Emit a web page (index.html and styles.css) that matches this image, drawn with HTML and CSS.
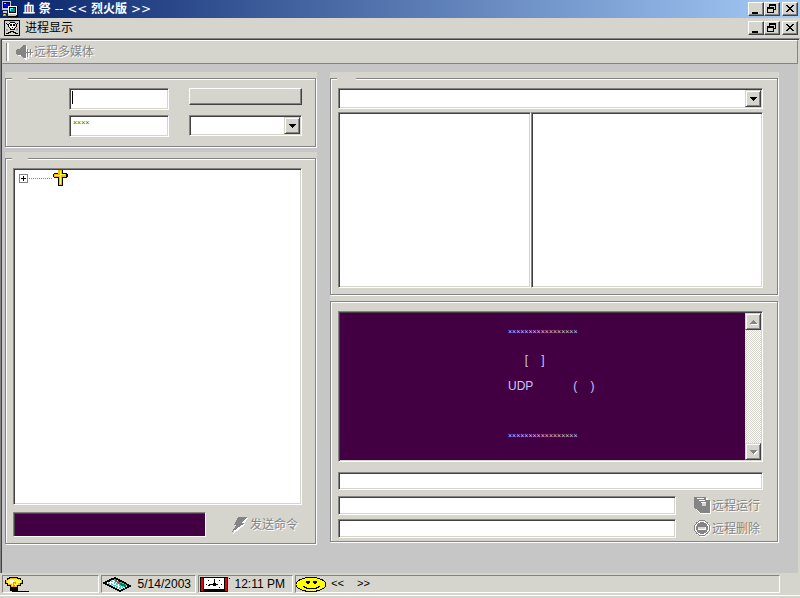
FILE: index.html
```
<!DOCTYPE html>
<html lang="zh-CN">
<head>
<meta charset="utf-8">
<meta name="viewport" content="width=device-width, initial-scale=1">
<title>血 祭 -- &lt;&lt; 烈火版 &gt;&gt;</title>
<link rel="stylesheet" href="styles.css">
</head>
<body>
<svg class="defs" width="0" height="0" aria-hidden="true">
  <symbol id="min" viewBox="0 0 16 14"><path d="M4 10h6v2H4z"/></symbol>
  <symbol id="restore" viewBox="0 0 16 14"><path d="M5 2h7v6h-2V7h1V4H6v1H5zM3 5h7v6H3zM4 7v3h5V7z" fill-rule="evenodd"/></symbol>
  <symbol id="close" viewBox="0 0 16 14"><path d="M4 3h2v1h1v1h2V4h1V3h2v1h-1v1h-1v1H9v1h1v1h1v1h1v1h-2V9H9V8H7v1H6v1H4V9h1V8h1V7h1V6H6V5H5V4H4z"/></symbol>
  <symbol id="down" viewBox="0 0 7 4"><path d="M0 0h7v1H6v1H5v1H4v1H3V3H2V2H1V1H0z"/></symbol>
</svg>
<div class="window">
  <header class="titlebar">
    <svg class="icon" width="16" height="16" viewBox="0 0 16 16" aria-hidden="true">
      <path fill="#c6c6c6" d="M0 0h9v9H0z"/><path fill="#000" d="M1 1h7v6H1z"/><path fill="#0000ff" d="M2 2h5v4H2z"/><path fill="#84c6ff" d="M2 2h2v1H2z"/>
      <path fill="#fff" d="M6 5h9v9H6z"/><path fill="#000" d="M15 5h1v11H6v-1h9zM7 6h7v6H7z"/><path fill="#008484" d="M8 7h5v4H8z"/><path fill="#42ffff" d="M8 7h3v1H9v2H8z"/>
      <path fill="#c6c6c6" d="M1 10h4v2H1zM6 13h8v2H6z"/><path fill="#ff8400" d="M1 13h3v2H1z"/><path fill="#ffff00" d="M2 13h1v1H2z"/>
    </svg>
    <h1><b>血</b> <b>祭</b> -- &lt;&lt; <b>烈火版</b> &gt;&gt;</h1>
    <div class="controls">
      <button aria-label="最小化"><svg><use href="#min"/></svg></button>
      <button aria-label="还原"><svg><use href="#restore"/></svg></button>
      <button class="close" aria-label="关闭"><svg><use href="#close"/></svg></button>
    </div>
  </header>
  <nav class="menubar">
    <svg class="icon" width="16" height="16" viewBox="0 0 16 16" aria-hidden="true">
      <path fill="#d6d5cd" d="M0 0h16v16H0z"/><path d="M0 0h16v16H0zM1 1v14h14V1z" fill-rule="evenodd"/>
      <path fill="#a5a5a5" d="M5 1h6v1H5zM2 9h2v2H2zM12 8h2v3h-2z"/>
      <path fill="#fff" d="M5 3h6v4h-1v3H6V7H5z"/>
      <path d="M5 3h1V2h5v1h1v1h-1V3H6v1H5v3h1v1h1v1h3V8h1V7h1V4h1v3h-1v1h-1v2H6V8H5V7H4V4h1z"/>
      <path d="M6 4h2v2H6zM9 4h2v2H9zM8 7h1v1H8zM2 3h1v1h1v1H3V4H2zM13 3h1v1h-1v1h-1V4h1zM2 13h2v-1h2v-1h4v1h2v1h2v1h-3v-1H9v-1H7v1H5v1H2z"/>
    </svg>
    <a href="#process">进程显示</a>
    <div class="controls">
      <button aria-label="最小化子窗口"><svg><use href="#min"/></svg></button>
      <button aria-label="还原子窗口"><svg><use href="#restore"/></svg></button>
      <button class="close" aria-label="关闭子窗口"><svg><use href="#close"/></svg></button>
    </div>
  </nav>

  <div class="frame">
    <div class="toolbar">
      <button class="flat" disabled>
        <svg class="icon" width="18" height="16" viewBox="0 0 18 16" aria-hidden="true">
          <path fill="#fff" d="M2 7h3l5-5h1v14h-1l-5-4H2zM12 6h1v9h-1zM15 6h1v7h-1zM11 9h7v1h-7z"/>
          <path fill="#848484" d="M0 6h1V5h3V4h1V3h1V2h1V1h3v13H7v-1H6v-1H5v-1H1v-1H0zM11 5h1v8h-1zM14 5h1v6h-1zM10 8h7v1h-7z"/>
        </svg>远程多媒体</button>
    </div>

    <main class="client">
      <div class="column">
        <section class="group">
          <div class="box login">
            <input class="sunken caret" type="text" aria-label="地址">
            <button class="raised" aria-label="连接"></button>
            <input class="sunken masked" type="text" value="××××" aria-label="密码">
            <div class="combo sunken">
              <select aria-label="模式"><option></option></select>
              <span class="arrow"><svg class="tri"><use href="#down"/></svg></span>
            </div>
          </div>
        </section>
        <section class="group fill">
          <div class="box stack">
            <ul class="tree sunken">
              <li>
                <svg width="52" height="17" viewBox="0 0 52 17" aria-hidden="true">
                  <path fill="#848484" d="M0 4h9v9H0z"/><path fill="#fff" d="M1 5h7v7H1z"/><path d="M2 8h5v1H2zM4 6h1v5H4z"/>
                  <path stroke="#848484" stroke-dasharray="1 1" d="M10 8.500h24"/>
                  <path d="M39 0h5v3h4v1h1v3h-1v1h-4v8h-5V8h-4V7h-1V4h1V3h4z"/>
                  <path fill="#ffb500" d="M39 0h4v4h4v3h-4v8h-3V7h-5V4h4z"/>
                  <path fill="#ffff42" d="M41 1h1v3h4v1h-4v9h-1V6h-5V5h5z"/>
                </svg>
              </li>
            </ul>
            <div class="command">
              <input class="sunken dark" type="text" aria-label="命令">
              <button class="flat" disabled>
                <svg class="icon" width="16" height="18" viewBox="0 0 16 18" aria-hidden="true">
                  <path fill="#fff" d="M7 2h9l-4 6h2L1 18l3-8H3z"/><path fill="#848484" d="M6 1h9l-5 6h3L0 16l4-7H2z"/>
                </svg>发送命令</button>
            </div>
          </div>
        </section>
      </div>

      <div class="column right">
        <section class="group files">
          <div class="box stack">
            <div class="combo sunken">
              <select aria-label="驱动器"><option></option></select>
              <span class="arrow"><svg class="tri"><use href="#down"/></svg></span>
            </div>
            <div class="lists">
              <div class="sunken"></div>
              <div class="sunken"></div>
            </div>
          </div>
        </section>
        <section class="group log">
          <div class="box stack">
            <div class="console sunken">
              <div class="lines">
                <p class="stars">×××××××××××××××××</p>
                <p>&nbsp;</p>
                <p>     [    ]</p>
                <p>&nbsp;</p>
                <p>UDP            (    )</p>
                <p>&nbsp;</p>
                <p>&nbsp;</p>
                <p>&nbsp;</p>
                <p class="stars">×××××××××××××××××</p>
              </div>
              <div class="scrollbar">
                <span class="arrow off"><svg class="tri up"><use href="#down"/></svg></span>
                <span class="arrow off"><svg class="tri"><use href="#down"/></svg></span>
              </div>
            </div>
            <input class="sunken path" type="text" aria-label="路径">
            <div class="action">
              <input class="sunken" type="text" aria-label="运行文件">
              <button class="flat" disabled>
                <svg class="icon" width="17" height="17" viewBox="0 0 17 17" aria-hidden="true">
                  <path fill="#fff" d="M1 1h13v3h3v13H7l-6-5z"/><path fill="#848484" d="M0 0h12v3h4v13H6v-1H5v-1H4v-1H3v-1H1v-1H0z"/>
                  <path fill="#fff" d="M3 1h7v1H3zM5 3h6v1H5zM7 5h5v1H7z"/><path fill="#d6d5cd" d="M8 6h4v3H8z"/>
                </svg>远程运行</button>
            </div>
            <div class="action">
              <input class="sunken" type="text" aria-label="删除文件">
              <button class="flat" disabled>
                <svg class="icon" width="17" height="17" viewBox="0 0 17 17" aria-hidden="true">
                  <circle cx="9" cy="9" r="7.500" fill="none" stroke="#fff"/><circle cx="8" cy="8" r="7.500" fill="#fff" stroke="#848484"/><circle cx="8" cy="8" r="6" fill="#848484"/><path fill="#fff" d="M4 7h8v3H4z"/><path fill="#d6d5cd" d="M4 7h7v2H4z"/>
                </svg>远程删除</button>
            </div>
          </div>
        </section>
      </div>
    </main>
  </div>

  <footer class="statusbar">
    <div class="panel">
      <svg class="icon" width="27" height="15" viewBox="0 0 27 15" aria-hidden="true">
        <path d="M5 0h9v1h3v2h2v4h-2v2h-3v5h11v1H8v-1H6V9H3V7H1V3h2V1h2z"/>
        <path fill="#ffb500" d="M6 1h7v1h3v1h2v3h-2v2h-3v2H7V8H4V6H2V3h2V2h2z"/>
        <path fill="#ffff42" d="M5 2h9v1h3v3h-3v2h-2v1H8V7H4V6H3V3h2z"/><path fill="#fff" d="M6 3h4v3H6z"/>
        <path fill="#ff8400" d="M9 5h3v2h-1v3H9z"/><path fill="#ffff42" d="M10 6h1v2h-1z"/>
      </svg>
    </div>
    <div class="panel">
      <svg class="icon" width="29" height="15" viewBox="0 0 29 15" aria-hidden="true">
        <path fill="#fff" stroke="#000" stroke-width="2" d="M1 6l11-5 15 8-10 5z"/>
        <path stroke="#42c6d6" stroke-width="2" stroke-dasharray="2 1" d="M5 6l14 6M8 4l14 7M11 3l13 6"/>
        <path stroke="#a55a21" stroke-width="2" d="M12 3l7 5"/><path stroke="#008442" stroke-width="2" d="M17 7l6 2"/>
      </svg>
      <time>5/14/2003</time>
    </div>
    <div class="panel">
      <svg class="icon" width="30" height="15" viewBox="0 0 30 15" aria-hidden="true">
        <path d="M0 0h28v15H0zM29 1h1v1h-1z"/><path fill="#e70000" d="M1 1h2v13H1zM25 1h2v13h-2z"/><path fill="#fff" d="M4 1h20v11H4z"/>
        <path d="M14 2h1v7h-1zM9 7h9v1H9zM13 6h3v3h-3zM8 8h2v1H8zM6 7h1v1H6zM21 7h1v1h-1zM8 3h1v1H8zM19 3h1v1h-1zM19 10h1v1h-1z"/>
      </svg>
      <time>12:11 PM</time>
    </div>
    <div class="panel wide">
      <svg class="icon" width="31" height="15" viewBox="0 0 31 15" aria-hidden="true">
        <ellipse cx="15" cy="7.500" rx="15" ry="7" fill="#ff0" stroke="#000"/>
        <path d="M10 4h4v2h-1v1h-2V6h-1zM17 4h4v2h-1v1h-2V6h-1zM7 9h2v1h2v1h9v-1h2V9h2v1h-1v1h-2v1H10v-1H8v-1H7z"/>
      </svg>
      <span class="marks">&lt;&lt;</span><span class="marks">&gt;&gt;</span>
    </div>
  </footer>
</div>
</body>
</html>
```
FILE: styles.css
```
:root {
  --face: #d6d5cd;
  --shade: #848484;
  --dark: #424142;
  --client: #c6c6c6;
  --plum: #420042;
}

* { box-sizing: border-box; }

body {
  margin: 0;
  background: var(--face);
  color: #000;
  font: 12px/16px "Liberation Sans", "Noto Sans CJK SC", sans-serif;
}

.defs { position: absolute; }

svg { display: block; shape-rendering: crispEdges; }

.icon { flex: none; }

button, input, select { font: inherit; margin: 0; padding: 0; border-radius: 0; min-width: 0; }

.window { display: flex; flex-direction: column; min-height: 100vh; }

.titlebar, .menubar { display: flex; align-items: center; padding-right: 2px; }

.titlebar {
  height: 18px;
  padding-left: 2px;
  gap: 5px;
  background: linear-gradient(90deg, #08246b, #a5cbf7);
}

.titlebar h1 {
  margin: 0;
  color: #fff;
  font: 12px/16px "DejaVu Sans", "Noto Sans CJK SC", sans-serif;
}

.titlebar b { font-weight: 700; }

.menubar { height: 20px; padding-left: 4px; gap: 5px; }

.menubar a { color: inherit; text-decoration: none; }

.controls { display: flex; margin-left: auto; }

.controls button, .raised, .arrow {
  background: var(--face);
  border: 1px solid;
  border-color: #fff var(--dark) var(--dark) #fff;
  box-shadow: inset -1px -1px var(--shade);
}

.controls button { width: 16px; height: 14px; }

.controls svg { width: 16px; height: 14px; margin: -1px; }

.controls .close { margin-left: 2px; }

.frame {
  flex: 1;
  display: flex;
  flex-direction: column;
  border: 1px solid;
  border-color: var(--shade) var(--face) var(--face) var(--shade);
  border-bottom: 0;
  box-shadow: inset 1px 1px var(--dark);
  padding: 1px 1px 0 1px;
}

.toolbar {
  display: flex;
  align-items: center;
  height: 24px;
  padding-left: 3px;
  border: 1px solid;
  border-color: #fff var(--shade) var(--shade) var(--face);
}

.toolbar::before {
  content: "";
  width: 2px;
  height: 18px;
  margin-right: 7px;
  border-left: 1px solid var(--shade);
  background: #fff;
}

.flat {
  display: flex;
  align-items: center;
  border: 0;
  background: none;
  color: var(--shade);
  text-shadow: 1px 1px #fff;
  white-space: nowrap;
}

.client {
  flex: 1;
  display: grid;
  grid-template-columns: 312fr 449fr;
  gap: 13px;
  padding: 8px 19px 28px 3px;
  background: var(--client);
}

.column { display: flex; flex-direction: column; gap: 4px; min-width: 0; }

.right { gap: 0; margin-bottom: 2px; }

.group { display: flex; background: var(--face); padding: 6px 1px 1px 0; }

.fill { flex: 1; }
.files { flex: 223; }
.log { flex: 247; padding-top: 5px; }

.box {
  position: relative;
  flex: 1;
  min-width: 0;
  border: 1px solid var(--shade);
  box-shadow: 1px 1px #fff, inset 1px 1px #fff;
}

/* Break in the etched line where the caption sits */
.box::before {
  content: "";
  position: absolute;
  top: -1px;
  left: 6px;
  width: 16px;
  height: 2px;
  background: var(--face);
}

.files .box::before { width: 19px; }

.log .box::before { display: none; }

.stack { display: flex; flex-direction: column; padding: 9px 13px 6px 7px; }

.right .stack { padding-right: 14px; }

.log .stack { padding-bottom: 3px; }

.sunken {
  background: #fff;
  border: 1px solid;
  border-color: var(--shade) #fff #fff var(--shade);
  box-shadow: inset 1px 1px var(--dark), inset -1px -1px var(--face);
  padding: 1px;
  outline: 0;
}

.login {
  display: grid;
  grid-template-columns: 100fr 113fr;
  grid-auto-rows: 22px;
  gap: 5px 20px;
  padding: 9px 13px 9px 63px;
}

.login input { width: 100%; }

.caret {
  background: linear-gradient(#000, #000) 2px 2px / 1px 13px no-repeat #fff;
}

.login .masked {
  color: #008400;
  font-size: 7px;
  padding: 0 3px 6px;
}

.raised { height: 17px; }

.combo { display: flex; height: 21px; }

.combo select { flex: 1; border: 0; appearance: none; background: none; }

.arrow {
  display: flex;
  align-items: center;
  justify-content: center;
  width: 16px;
  height: 17px;
  flex: none;
  border-color: var(--face) var(--dark) var(--dark) var(--face);
  box-shadow: inset 1px 1px #fff, inset -1px -1px var(--shade);
}

.tri { width: 7px; height: 4px; }

.up { transform: rotate(180deg); }

.off .tri { fill: var(--shade); filter: drop-shadow(1px 1px 0 #fff); }

.off .up { filter: drop-shadow(-1px -1px 0 #fff); }

.tree {
  flex: 1;
  margin: 0 0 7px;
  padding-left: 5px;
  list-style: none;
}

.command { display: flex; justify-content: space-between; height: 25px; padding-right: 4px; }

.command input { width: 193px; }

.command .flat { gap: 2px; }

.sunken.dark { background: var(--plum); color: #c6c6ff; box-shadow: inset 1px 1px var(--dark); }

.lists {
  flex: 1;
  display: grid;
  grid-template-columns: 193fr 232fr;
  margin-top: 3px;
}

.console { flex: 1; display: flex; }

.lines {
  flex: 1;
  padding: 15px 0 0 168px;
  background: var(--plum);
  color: #c6c6ff;
  line-height: 13px;
}

.lines p { margin: 0; white-space: pre; }

.lines .stars { font-size: 7px; line-height: 7px; padding-bottom: 6px; }

.scrollbar {
  display: flex;
  flex-direction: column;
  justify-content: space-between;
  background: repeating-conic-gradient(#fff 0 25%, var(--face) 0 50%) 0 0 / 2px 2px;
}

.path { height: 18px; margin: 10px 0 6px; }

.action { display: flex; gap: 18px; height: 19px; }

.action + .action { margin-top: 4px; }

.action input { flex: 1; }

.action .flat { width: 69px; gap: 1px; }

.statusbar {
  display: flex;
  gap: 2px;
  height: 25px;
  padding: 2px 20px 5px 2px;
  box-shadow: inset 0 -2px var(--face), inset 0 -3px #fff;
}

.panel {
  display: flex;
  align-items: center;
  justify-content: space-between;
  width: 95px;
  padding: 0 4px 0 1px;
  background: var(--face);
  border: 1px solid;
  border-color: var(--shade) #fff #fff var(--shade);
  white-space: nowrap;
}

.panel:first-child { width: 97px; }

.panel:nth-child(3) { padding-right: 7px; }

.wide { flex: 1; justify-content: flex-start; gap: 4px; padding-left: 0; }

.marks { min-width: 22px; font-family: "Liberation Mono", monospace; font-size: 11px; }
```
